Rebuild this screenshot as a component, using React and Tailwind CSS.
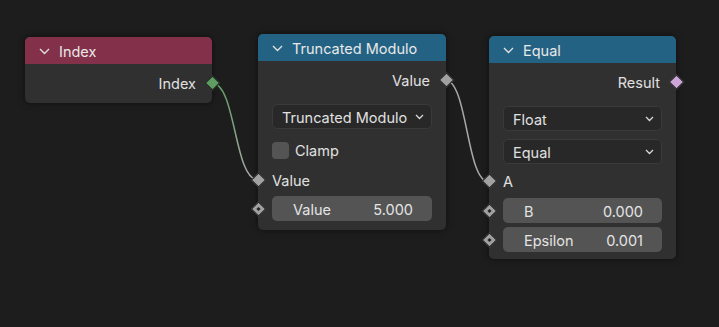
import React from 'react';

const font = { fontFamily: 'Inter, "Noto Sans", sans-serif' };

const Chevron = ({ className = '' }) => (
  <svg width="11" height="7" viewBox="0 0 11 7" className={className}>
    <polyline points="1,1 5.5,5.5 10,1" fill="none" stroke="#e0e0e0" strokeWidth="1.4" />
  </svg>
);

const SmallChevron = () => (
  <svg width="9" height="6" viewBox="0 0 9 6" className="shrink-0">
    <polyline points="1,1 4.5,4.5 8,1" fill="none" stroke="#d8d8d8" strokeWidth="1.3" />
  </svg>
);

// diamond socket, sits on the node edge
const Socket = ({ color, dot, side }) => (
  <div
    className={`absolute top-1/2 w-[11px] h-[11px] -translate-y-1/2 rotate-45 border border-[#1a1a1a] flex items-center justify-center ${
      side === 'left' ? '-left-[5.5px]' : '-right-[5.5px]'
    }`}
    style={{ backgroundColor: color }}
  >
    {dot && <div className="w-[3px] h-[3px] bg-[#262626]" />}
  </div>
);

const Header = ({ title, color }) => (
  <div className={`h-[27px] flex items-center pl-[14px] pt-[2px] gap-[9px] rounded-t-[5px] ${color}`}>
    <Chevron />
    <span className="text-[14.5px] text-[#e8e8e8]">{title}</span>
  </div>
);

const OutRow = ({ label, color, className = '' }) => (
  <div className={`relative h-[22px] flex items-center justify-end pr-[16px] ${className}`}>
    <span className="text-[14.5px] text-[#e0e0e0] translate-y-[1px]">{label}</span>
    <Socket color={color} side="right" />
  </div>
);

const InRow = ({ label, className = '' }) => (
  <div className={`relative h-[22px] flex items-center pl-[14px] ${className}`}>
    <span className="text-[14.5px] text-[#e0e0e0] translate-y-[1px]">{label}</span>
    <Socket color="#a1a1a1" side="left" />
  </div>
);

const Dropdown = ({ label, className = '' }) => (
  <div className={`mx-[14px] h-[25px] rounded-[5px] bg-[#282828] border border-[#3a3a3a] flex items-center justify-between pl-[9px] pr-[7px] ${className}`}>
    <span className="text-[14.5px] text-[#e0e0e0] translate-y-[1px]">{label}</span>
    <SmallChevron />
  </div>
);

const NumField = ({ label, value, className = '' }) => (
  <div className={`relative h-[25px] ${className}`}>
    <Socket color="#a1a1a1" dot side="left" />
    <div className="mx-[14px] h-full rounded-[5px] bg-[#545454] flex items-center justify-between pl-[21px] pr-[19px]">
      <span className="text-[14.5px] text-[#e4e4e4] translate-y-[1px]">{label}</span>
      <span className="text-[14.5px] text-[#e4e4e4] translate-y-[1px]">{value}</span>
    </div>
  </div>
);

export default function App() {
  return (
    <div className="relative w-[719px] h-[327px] overflow-hidden bg-[#1d1d1d]" style={font}>
      <svg className="absolute inset-0" width="719" height="327">
        <defs>
          <linearGradient id="lk" x1="212" y1="83" x2="258" y2="180" gradientUnits="userSpaceOnUse">
            <stop offset="0" stopColor="#5f9c62" />
            <stop offset="1" stopColor="#a8a8a8" />
          </linearGradient>
        </defs>
        <path d="M212 83 C236 83 234 180 258 180" fill="none" stroke="url(#lk)" strokeWidth="1.5" />
        <path d="M445 80 C468 80 466 182 489 182" fill="none" stroke="#a8a8a8" strokeWidth="1.5" />
      </svg>

      {/* Index */}
      <div className="absolute left-[25px] top-[37px] w-[187px] h-[66px] rounded-[5px] bg-[#303030] shadow-[0_0_6px_rgba(0,0,0,0.55)]">
        <Header title="Index" color="bg-[#83314a]" />
        <OutRow label="Index" color="#5f9c62" className="mt-[8px]" />
      </div>

      {/* Truncated Modulo */}
      <div className="absolute left-[258px] top-[34px] w-[188px] h-[196px] rounded-[5px] bg-[#303030] shadow-[0_0_6px_rgba(0,0,0,0.55)]">
        <Header title="Truncated Modulo" color="bg-[#246283]" />
        <OutRow label="Value" color="#a1a1a1" className="mt-[8px]" />
        <Dropdown label="Truncated Modulo" className="mt-[13px]" />
        <div className="mt-[10px] h-[22px] flex items-center gap-[6px] pl-[14px]">
          <div className="w-[17px] h-[17px] rounded-[4px] bg-[#545454]" />
          <span className="text-[14.5px] text-[#e0e0e0] translate-y-[1px]">Clamp</span>
        </div>
        <InRow label="Value" className="mt-[8px]" />
        <NumField label="Value" value="5.000" className="mt-[5px]" />
      </div>

      {/* Equal */}
      <div className="absolute left-[489px] top-[36px] w-[187px] h-[223px] rounded-[5px] bg-[#303030] shadow-[0_0_6px_rgba(0,0,0,0.55)]">
        <Header title="Equal" color="bg-[#246283]" />
        <OutRow label="Result" color="#cca6d6" className="mt-[8px]" />
        <Dropdown label="Float" className="mt-[13px]" />
        <Dropdown label="Equal" className="mt-[8px]" />
        <InRow label="A" className="mt-[6px]" />
        <NumField label="B" value="0.000" className="mt-[6px]" />
        <NumField label="Epsilon" value="0.001" className="mt-[4px]" />
      </div>
    </div>
  );
}
